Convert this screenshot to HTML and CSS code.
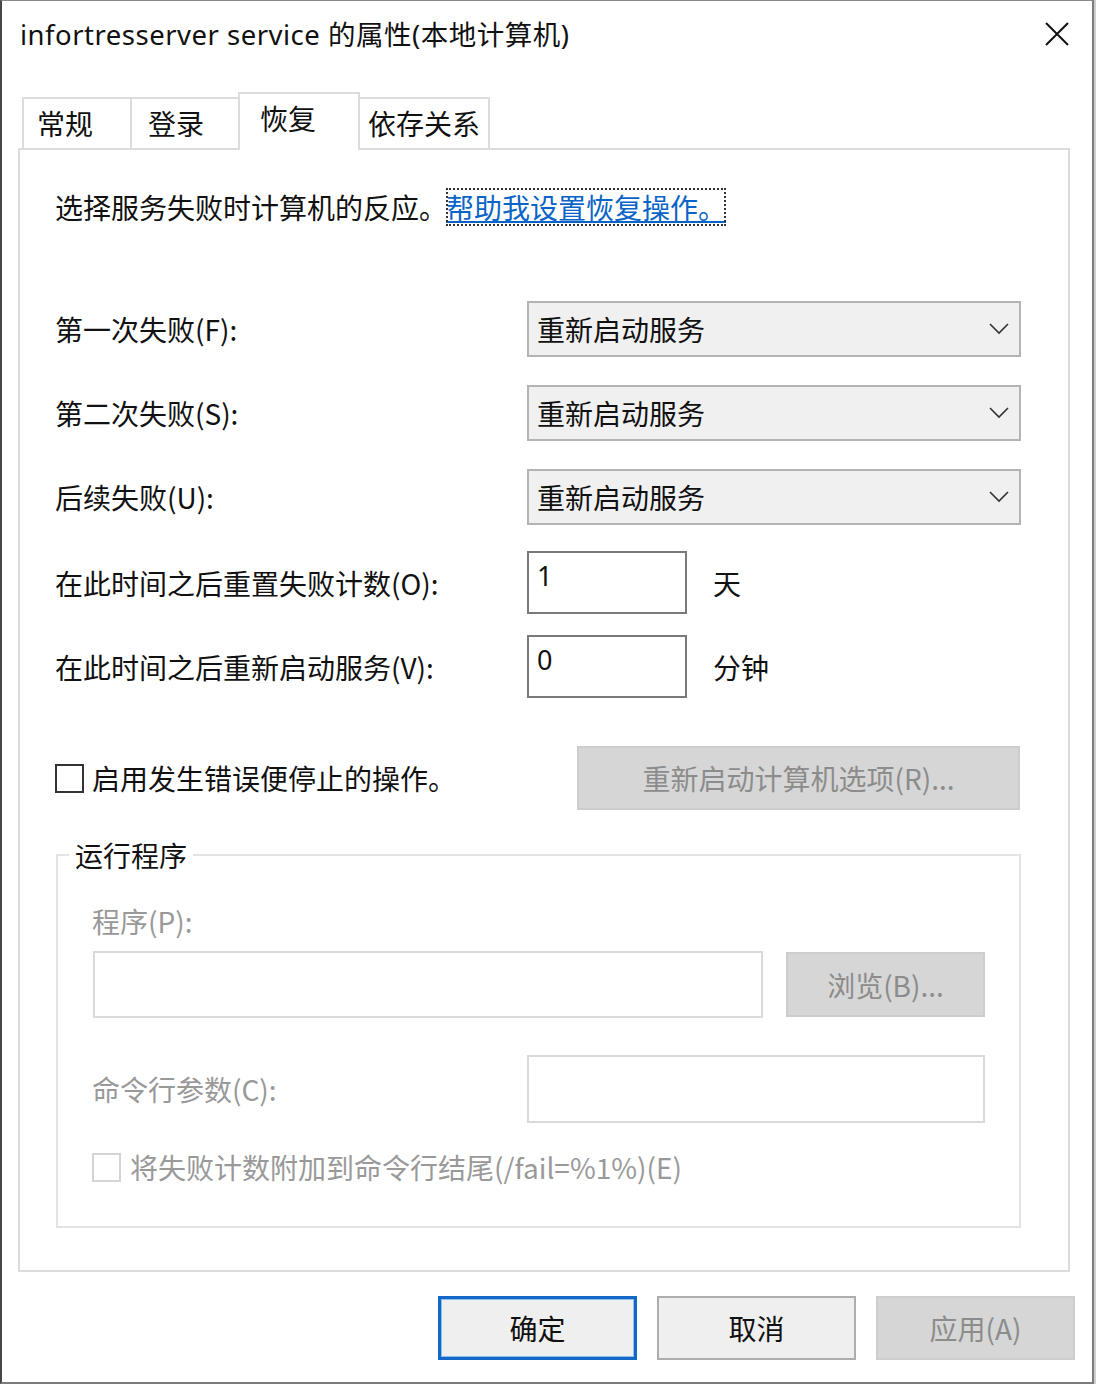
FILE: index.html
```html
<!DOCTYPE html>
<html>

<head>
    <title>infortresserver service 的属性(本地计算机)</title>
    <link rel="stylesheet" href="styles.css">
</head>

<body>

    <div class="window">

        <!-- Title bar -->
        <div class="title-bar">
            <span class="title">infortresserver service 的属性(本地计算机)</span>
            <svg class="close" width="26" height="26" viewBox="0 0 26 26">
                <path d="M2 2 L24 24 M24 2 L2 24" stroke="#111" stroke-width="2" fill="none" />
            </svg>
        </div>

        <!-- Tabs -->
        <div class="tabs">
            <div class="tab tab-general">常规</div>
            <div class="tab tab-logon">登录</div>
            <div class="tab tab-recovery active">恢复</div>
            <div class="tab tab-deps">依存关系</div>
        </div>

        <div class="panel">
            <div class="intro">选择服务失败时计算机的反应。<a class="help-link">帮助我设置恢复操作。</a></div>

            <div class="row row-first">
                <span class="label">第一次失败(F):</span>
                <div class="select">
                    <span>重新启动服务</span>
                    <svg width="20" height="12" viewBox="0 0 20 12"><path d="M1 1 L10 10 L19 1" stroke="#333" stroke-width="1.6" fill="none" /></svg>
                </div>
            </div>
            <div class="row row-select">
                <span class="label">第二次失败(S):</span>
                <div class="select">
                    <span>重新启动服务</span>
                    <svg width="20" height="12" viewBox="0 0 20 12"><path d="M1 1 L10 10 L19 1" stroke="#333" stroke-width="1.6" fill="none" /></svg>
                </div>
            </div>
            <div class="row row-select">
                <span class="label">后续失败(U):</span>
                <div class="select">
                    <span>重新启动服务</span>
                    <svg width="20" height="12" viewBox="0 0 20 12"><path d="M1 1 L10 10 L19 1" stroke="#333" stroke-width="1.6" fill="none" /></svg>
                </div>
            </div>

            <div class="row row-reset">
                <span class="label">在此时间之后重置失败计数(O):</span>
                <div class="num-input">1</div>
                <span class="unit">天</span>
            </div>
            <div class="row row-restart">
                <span class="label">在此时间之后重新启动服务(V):</span>
                <div class="num-input">0</div>
                <span class="unit">分钟</span>
            </div>

            <div class="row row-stop">
                <span class="checkbox"></span>
                <span class="check-label">启用发生错误便停止的操作。</span>
                <div class="btn btn-disabled btn-reboot">重新启动计算机选项(R)...</div>
            </div>

            <fieldset class="group">
                <legend>运行程序</legend>
                <div class="group-body">
                    <div class="muted">程序(P):</div>
                    <div class="program-row">
                        <div class="text-box program-box"></div>
                        <div class="btn btn-disabled btn-browse">浏览(B)...</div>
                    </div>
                    <div class="args-row">
                        <span class="muted args-label">命令行参数(C):</span>
                        <div class="text-box args-box"></div>
                    </div>
                    <div class="fail-row">
                        <span class="checkbox checkbox-disabled"></span>
                        <span class="muted">将失败计数附加到命令行结尾(/fail=%1%)(E)</span>
                    </div>
                </div>
            </fieldset>
        </div>

        <!-- Dialog buttons -->
        <div class="footer">
            <div class="btn btn-default">确定</div>
            <div class="btn">取消</div>
            <div class="btn btn-disabled">应用(A)</div>
        </div>

    </div>

</body>

</html>
```

FILE: styles.css
```css
body {
    margin: 0;
    background-color: #cfcfcf;
    color: #111;
    font-family: "Noto Sans CJK SC", "Noto Sans", sans-serif;
    font-size: 28px;
    line-height: 38px;
}

.window {
    box-sizing: border-box;
    width: 1094px;
    height: 1384px;
    background-color: #fff;
    border: 2px solid #7c7c7c;
    border-top: 1px solid #8a8a8a;
    border-left-color: #474747;
}

.title-bar {
    height: 68px;
    display: flex;
    align-items: center;
    justify-content: space-between;
    padding: 0 22px 0 18px;
}

.title {
    font-family: "Noto Sans", "Noto Sans CJK SC", sans-serif;
    font-size: 27.5px;
    letter-spacing: 0.5px;
}

.close {
    margin-top: -2px;
}

.tabs {
    display: flex;
    align-items: flex-end;
    height: 56px;
    margin-top: 23px;
    padding-left: 20px;
}

.tab {
    box-sizing: border-box;
    height: 51px;
    padding-top: 5px;
    border: 2px solid #dcdcdc;
    border-bottom: none;
    background-color: #fff;
}

.tab + .tab {
    margin-left: -2px;
}

.tab-general {
    width: 110px;
    padding-left: 13px;
}

.tab-logon {
    width: 110px;
    padding-left: 16px;
}

.tab-recovery {
    width: 122px;
    padding-left: 20px;
}

.tab-deps {
    width: 132px;
    padding-left: 8px;
}

.tab.active {
    position: relative;
    height: 58px;
    margin-bottom: -2px;
    z-index: 1;
}

.panel {
    box-sizing: border-box;
    width: 1052px;
    margin-left: 16px;
    padding: 38px 47px 42px 35px;
    border: 2px solid #dcdcdc;
}

.help-link {
    display: inline-block;
    margin-left: -1px;
    color: #0a64c8;
    text-decoration: underline;
    outline: 2px dotted #333;
    outline-offset: -2px;
}

.row {
    display: flex;
    align-items: center;
}

.row-first {
    margin-top: 75px;
}

.row-select {
    margin-top: 28px;
}

.row-reset {
    margin-top: 26px;
}

.row-restart {
    margin-top: 21px;
}

.row-stop {
    margin-top: 48px;
}

.label {
    width: 472px;
}

.select {
    box-sizing: border-box;
    flex: 1;
    height: 56px;
    display: flex;
    align-items: center;
    justify-content: space-between;
    padding: 0 10px 0 8px;
    background-color: #f0f0f0;
    border: 2px solid #b4b4b4;
}

.num-input {
    box-sizing: border-box;
    width: 160px;
    height: 63px;
    padding: 4px 8px;
    border: 2px solid #7a7a7a;
    font-family: "Noto Sans", sans-serif;
    font-size: 27px;
}

.unit {
    margin-left: 26px;
}

.checkbox {
    box-sizing: border-box;
    width: 29px;
    height: 29px;
    border: 2px solid #333;
    background-color: #fff;
}

.checkbox-disabled {
    border-color: #d4d4d4;
}

.check-label {
    margin-left: 8px;
}

.btn {
    box-sizing: border-box;
    width: 199px;
    height: 64px;
    display: flex;
    align-items: center;
    justify-content: center;
    background-color: #efefef;
    border: 2px solid #adadad;
}

.btn-disabled {
    background-color: #d6d6d6;
    border-color: #cdcdcd;
    color: #8c8c8c;
}

.btn-default {
    border: 3px solid #1467c4;
    box-shadow: inset 0 0 0 1px #8cc0f0;
}

.btn-reboot {
    width: 443px;
    margin-left: auto;
    margin-right: 1px;
}

.group {
    margin: 26px 0 0 1px;
    padding: 0;
    border: 2px solid #e3e3e3;
}

.group legend {
    margin-left: 11px;
    padding: 0 6px;
}

.group-body {
    padding: 28px 34px 40px 34px;
}

.muted {
    color: #999;
}

.program-row {
    display: flex;
    align-items: center;
    justify-content: space-between;
    margin-top: 11px;
}

.text-box {
    box-sizing: border-box;
    border: 2px solid #dadada;
    background-color: #fff;
}

.program-box {
    width: 670px;
    height: 67px;
    margin-left: 1px;
}

.btn-browse {
    height: 65px;
}

.args-row {
    display: flex;
    align-items: center;
    margin-top: 37px;
}

.args-label {
    width: 435px;
}

.args-box {
    width: 458px;
    height: 68px;
}

.fail-row {
    display: flex;
    align-items: center;
    gap: 9px;
    margin-top: 25px;
}

.footer {
    display: flex;
    justify-content: flex-end;
    gap: 20px;
    margin-top: 24px;
    padding-right: 17px;
}
```
